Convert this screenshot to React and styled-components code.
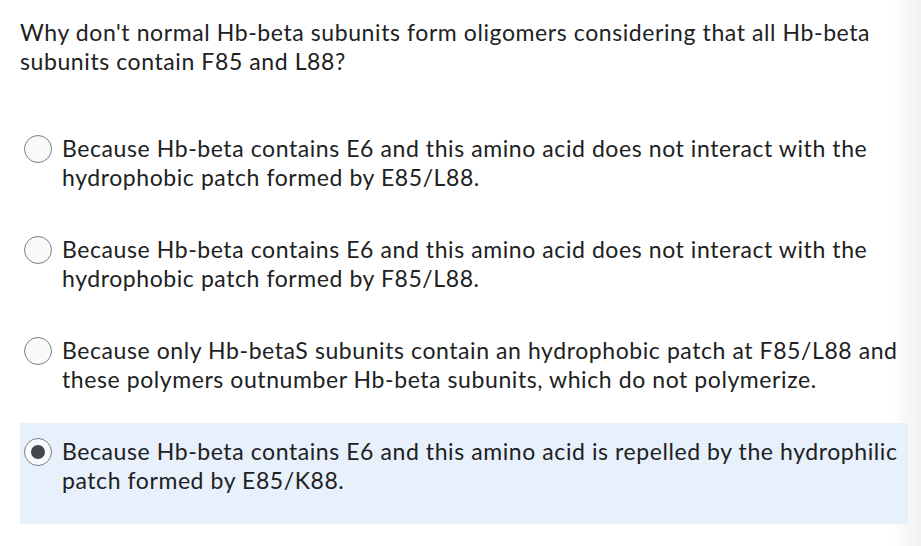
import React from "react";
import styled, { createGlobalStyle } from "styled-components";

const Global = createGlobalStyle`
  html, body { margin: 0; padding: 0; }
  body {
    width: 921px;
    height: 546px;
    overflow: hidden;
    background: linear-gradient(to right, #ffffff 0px, #ffffff 893px, #f1f1f1 921px);
    font-family: Lato, "Noto Sans", sans-serif;
    color: #202122;
  }
`;

const Page = styled.div`
  padding: 18px 13px 0 20px;
`;

const Question = styled.p`
  margin: 0 0 44px 0;
  font-size: 23px;
  letter-spacing: 0.59px;
  line-height: 29px;
`;

const List = styled.div`
  display: flex;
  flex-direction: column;
`;

const Option = styled.label`
  display: flex;
  align-items: flex-start;
  gap: 10px;
  padding: 14px 8px 29px 4px;
  min-height: 58px;
  background: ${(p) => (p.$selected ? "#e7f0fb" : "transparent")};
  font-size: 23px;
  letter-spacing: 0.58px;
  line-height: 29px;
`;

const Radio = styled.span`
  flex: none;
  box-sizing: border-box;
  width: 28px;
  height: 28px;
  margin-top: 1px;
  border-radius: 50%;
  border: 1px solid #7c7e82;
  background: #f9fafc;
  display: flex;
  align-items: center;
  justify-content: center;
  &::after {
    content: "";
    display: ${(p) => (p.$checked ? "block" : "none")};
    width: 14px;
    height: 14px;
    border-radius: 50%;
    background: #44474b;
  }
`;

const OptionText = styled.span`
  flex: 1;
`;

const options = [
  "Because Hb-beta contains E6 and this amino acid does not interact with the hydrophobic patch formed by E85/L88.",
  "Because Hb-beta contains E6 and this amino acid does not interact with the hydrophobic patch formed by F85/L88.",
  "Because only Hb-betaS subunits contain an hydrophobic patch at F85/L88 and these polymers outnumber Hb-beta subunits, which do not polymerize.",
  "Because Hb-beta contains E6 and this amino acid is repelled by the hydrophilic patch formed by E85/K88.",
];

export default function App() {
  return (
    <>
      <Global />
      <Page>
        <Question>
          Why don't normal Hb-beta subunits form oligomers considering that all Hb-beta subunits contain F85 and L88?
        </Question>
        <List>
          {options.map((t, i) => (
            <Option key={i} $selected={i === 3}>
              <Radio $checked={i === 3} />
              <OptionText>{t}</OptionText>
            </Option>
          ))}
        </List>
      </Page>
    </>
  );
}
